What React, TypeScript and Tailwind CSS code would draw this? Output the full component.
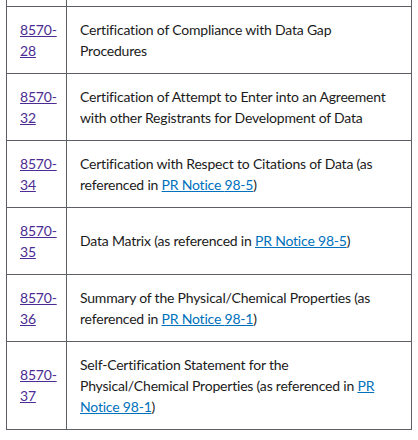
const rows = [
  { code: '28', text: <>Certification of Compliance with Data Gap<br />Procedures</> },
  { code: '32', text: <>Certification of Attempt to Enter into an Agreement<br />with other Registrants for Development of Data</> },
  {
    code: '34',
    text: <>Certification with Respect to Citations of Data (as<br />referenced in <Notice n="98-5" />)</>,
  },
  { code: '35', text: <>Data Matrix (as referenced in <Notice n="98-5" />)</> },
  {
    code: '36',
    text: <>Summary of the Physical/Chemical Properties (as<br />referenced in <Notice n="98-1" />)</>,
  },
  {
    code: '37',
    text: (
      <>
        Self-Certification Statement for the
        <br />
        Physical/Chemical Properties (as referenced in <a href="#" className="text-[#0071bc] underline">PR</a>
        <br />
        <a href="#" className="text-[#0071bc] underline">Notice 98-1</a>)
      </>
    ),
  },
]

function Notice({ n }: { n: string }) {
  return (
    <a href="#" className="text-[#0071bc] underline">
      PR Notice {n}
    </a>
  )
}

export default function App() {
  return (
    <div className="w-[418px] h-[440px] bg-white overflow-hidden pl-[6px] font-['Lato',sans-serif] text-[14px] tracking-[-0.2px] leading-[21px] text-[#1b1b1b]">
      <table className="w-[406px] table-fixed border-collapse">
        <colgroup>
          <col className="w-[60px]" />
          <col />
        </colgroup>
        <tbody>
          <tr className="h-[6px]">
            <td className="border-x border-b border-[#5c5f66]"></td>
            <td className="border-x border-b border-[#5c5f66]"></td>
          </tr>
          {rows.map((r) => (
            <tr key={r.code}>
              <td className="border border-[#5c5f66] px-[13px] py-[12px] align-middle whitespace-nowrap">
                <a href="#" className="text-[#4c2c92] underline">
                  8570-
                  <br />
                  {r.code}
                </a>
              </td>
              <td className="border border-[#5c5f66] px-[13px] py-[12px] align-middle whitespace-nowrap">{r.text}</td>
            </tr>
          ))}
        </tbody>
      </table>
    </div>
  )
}
